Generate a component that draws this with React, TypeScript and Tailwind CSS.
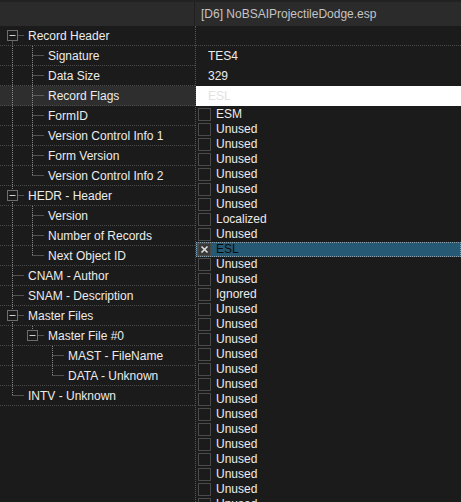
import React from 'react';

type Row = {
  label: string;
  depth: number;
  box?: boolean;
  last?: boolean;
  first?: boolean;
  guides: boolean[];
  active?: boolean;
};

const rows: Row[] = [
  { label: 'Record Header', depth: 0, box: true, first: true, guides: [] },
  { label: 'Signature', depth: 1, guides: [true] },
  { label: 'Data Size', depth: 1, guides: [true] },
  { label: 'Record Flags', depth: 1, guides: [true], active: true },
  { label: 'FormID', depth: 1, guides: [true] },
  { label: 'Version Control Info 1', depth: 1, guides: [true] },
  { label: 'Form Version', depth: 1, guides: [true] },
  { label: 'Version Control Info 2', depth: 1, last: true, guides: [true] },
  { label: 'HEDR - Header', depth: 0, box: true, guides: [] },
  { label: 'Version', depth: 1, guides: [true] },
  { label: 'Number of Records', depth: 1, guides: [true] },
  { label: 'Next Object ID', depth: 1, last: true, guides: [true] },
  { label: 'CNAM - Author', depth: 0, guides: [] },
  { label: 'SNAM - Description', depth: 0, guides: [] },
  { label: 'Master Files', depth: 0, box: true, guides: [] },
  { label: 'Master File #0', depth: 1, box: true, last: true, guides: [true] },
  { label: 'MAST - FileName', depth: 2, guides: [true, false] },
  { label: 'DATA - Unknown', depth: 2, last: true, guides: [true, false] },
  { label: 'INTV - Unknown', depth: 0, last: true, guides: [] },
];

// record flag bits, 0..31
const flags: string[] = Array.from({ length: 32 }, (_, i) => {
  if (i === 0) return 'ESM';
  if (i === 7) return 'Localized';
  if (i === 9) return 'ESL';
  if (i === 12) return 'Ignored';
  return 'Unused';
});

const LINE = '#8a8a8a';

function Connector({ row }: { row: Row }) {
  const w = 20 * row.depth + 28;
  const cx = 20 * row.depth + 12.5;
  const cy = 9.5;
  return (
    <svg width={w} height={19} className="shrink-0">
      {row.guides.map((on, i) =>
        on ? (
          <line key={i} x1={20 * i + 12.5} y1={0} x2={20 * i + 12.5} y2={19} stroke={LINE} strokeDasharray="1 1" />
        ) : null
      )}
      <line x1={cx} y1={row.first ? cy : 0} x2={cx} y2={row.last ? cy : 19} stroke={LINE} strokeDasharray="1 1" />
      <line x1={cx} y1={cy} x2={cx + 12} y2={cy} stroke={LINE} strokeDasharray="1 1" />
      {row.box && (
        <g>
          <rect x={cx - 5} y={cy - 5} width={10} height={10} fill="#1b1b1b" stroke="#6e6e6e" />
          <line x1={cx - 3} y1={cy} x2={cx + 3} y2={cy} stroke="#d0d0d0" />
        </g>
      )}
    </svg>
  );
}

function Check({ checked }: { checked?: boolean }) {
  return (
    <svg width={13} height={13} className="shrink-0">
      <rect x={0.5} y={0.5} width={12} height={12} fill={checked ? '#3a3a3a' : 'none'} stroke="#4a4a4a" />
      {checked && <path d="M3.5 3.5 L9.5 9.5 M9.5 3.5 L3.5 9.5" stroke="#e0e0e0" strokeWidth={1.6} />}
    </svg>
  );
}

export default function App() {
  return (
    <div
      className="w-[461px] h-[502px] overflow-hidden bg-[#1b1b1b] text-[12px] text-[#ececec] flex flex-col"
      style={{ fontFamily: '"Liberation Sans", Arial, sans-serif' }}
    >
      {/* column header */}
      <div className="h-[26px] shrink-0 border-t-2 border-[#222222] bg-[#2b2b2b] flex">
        <div className="w-[195px] border-r border-[#1f1f1f]" />
        <div className="flex-1 pl-[6px] flex items-center text-[#c4c4c4] leading-none">[D6] NoBSAIProjectileDodge.esp</div>
      </div>

      <div className="flex flex-1 min-h-0">
        {/* tree */}
        <div className="w-[196px] shrink-0 border-r border-dotted border-[#555555]">
          {rows.map((row) => (
            <div
              key={row.label}
              className={`h-5 flex items-start border-b border-dotted border-[#4a4a4a] ${row.active ? 'bg-[#2e2e2e]' : ''}`}
            >
              <Connector row={row} />
              <span className="pt-px leading-[19px] whitespace-nowrap">{row.label}</span>
            </div>
          ))}
        </div>

        {/* values + open flags dropdown */}
        <div className="flex-1 min-w-0 flex flex-col">
          <div className="h-5 shrink-0 border-b border-dotted border-[#4a4a4a]" />
          <div className="h-5 shrink-0 pl-3 leading-[20px]">TES4</div>
          <div className="h-5 shrink-0 pl-3 leading-[20px]">329</div>
          <div className="h-5 shrink-0 bg-white pl-3 leading-[20px] text-[#e2e2e2]">ESL</div>
          <div className="flex flex-col pt-px">
            {flags.map((f, i) => (
              <div
                key={i}
                className={`h-[15px] shrink-0 flex items-center gap-[5px] pl-[2px] ${
                  i === 9 ? 'bg-[#265a74] outline-1 outline-dotted outline-[#8aa0ac] -outline-offset-1' : ''
                }`}
              >
                <Check checked={i === 9} />
                <span className={`leading-[15px] whitespace-nowrap ${i === 9 ? 'text-[#0a0a0a]' : ''}`}>{f}</span>
              </div>
            ))}
          </div>
        </div>
      </div>
    </div>
  );
}
